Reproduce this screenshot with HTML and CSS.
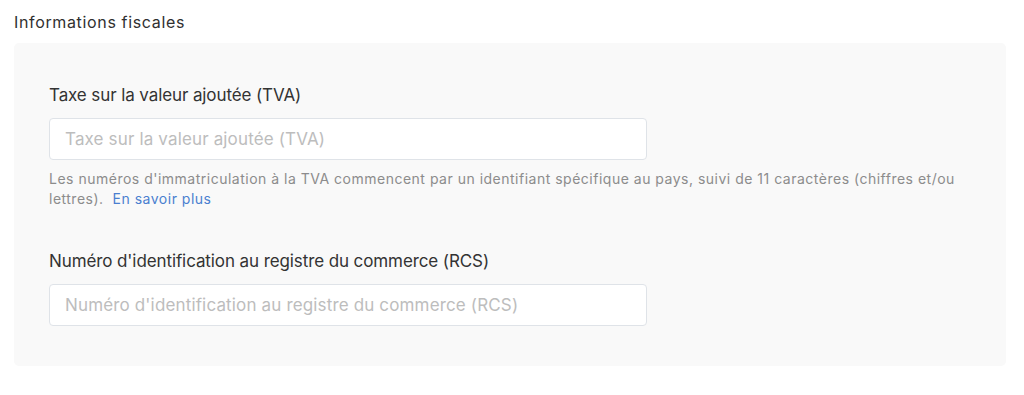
FILE: index.html
```html
<!DOCTYPE html>
<html lang="fr">
<head>
<meta charset="utf-8">
<link rel="stylesheet" href="styles.css">
</head>
<body>
<section class="section">
  <h2 class="section-title">Informations fiscales</h2>
  <div class="panel">
    <div class="field">
      <label class="field-label" for="tva">Taxe sur la valeur ajoutée (TVA)</label>
      <input class="field-input" id="tva" type="text" placeholder="Taxe sur la valeur ajoutée (TVA)">
      <p class="field-help"><span>Les numéros d'immatriculation à la TVA commencent par un identifiant spécifique au pays, suivi de 11 caractères (chiffres et/ou</span> <span>lettres).</span><a class="help-link" href="#">En savoir plus</a></p>
    </div>
    <div class="field field-second">
      <label class="field-label" for="rcs">Numéro d'identification au registre du commerce (RCS)</label>
      <input class="field-input" id="rcs" type="text" placeholder="Numéro d'identification au registre du commerce (RCS)">
    </div>
  </div>
</section>
</body>
</html>
```

FILE: styles.css
```css
html, body {
  margin: 0;
  padding: 0;
  background: #ffffff;
}

body {
  font-family: "Inter", "Liberation Sans", Arial, sans-serif;
  color: #333333;
}

.section {
  padding: 12px 18px 0 14px;
}

.section-title {
  margin: 0 0 11px 0;
  font-size: 16px;
  font-weight: normal;
  line-height: 20px;
  letter-spacing: 0.65px;
  color: #303030;
}

.panel {
  background: #f9f9f9;
  border-radius: 5px;
  padding: 42px 35px 40px 35px;
  display: flex;
  flex-direction: column;
}

.field {
  display: flex;
  flex-direction: column;
}

.field-second {
  margin-top: 42px;
}

.field-label {
  font-size: 17px;
  line-height: 20px;
  letter-spacing: -0.1px;
  color: #333333;
  margin-bottom: 13px;
}

.field-input {
  box-sizing: border-box;
  width: 598px;
  height: 42px;
  border: 1px solid #dfe3e8;
  border-radius: 4px;
  background: #ffffff;
  padding: 0 15px;
  font-family: inherit;
  font-size: 17px;
  letter-spacing: 0.15px;
  color: #333333;
  outline: none;
}

.field-input::placeholder {
  color: #bdbdbd;
}

.field-help {
  margin: 9px 0 0 0;
  font-size: 14px;
  line-height: 20px;
  letter-spacing: 0.5px;
  color: #8c8c8c;
}

.help-link {
  margin-left: 9px;
  color: #4a7fd0;
  text-decoration: none;
}
```
